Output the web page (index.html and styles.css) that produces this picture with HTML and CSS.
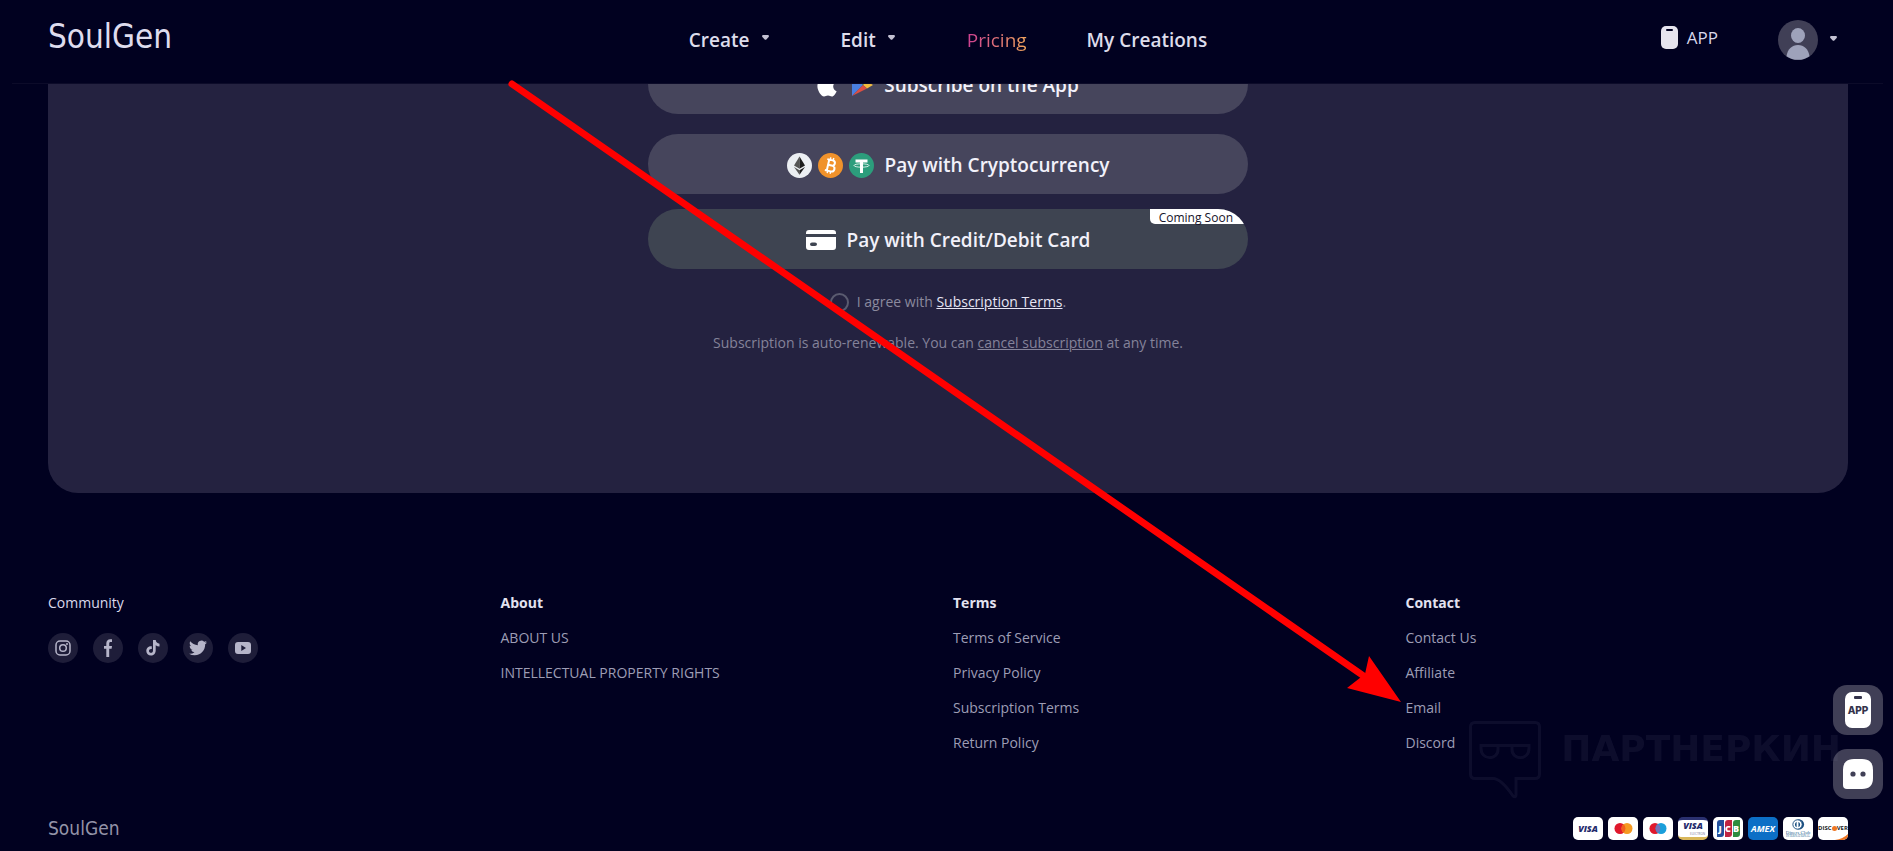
FILE: index.html
```html
<!DOCTYPE html>
<html lang="en">
<head>
    <meta charset="UTF-8">
    <meta name="viewport" content="width=device-width, initial-scale=1.0">
    <title>SoulGen - Pricing</title>
    <link rel="stylesheet" href="styles.css">
</head>
<body>
    <header class="header">
        <div class="header-inner">
            <a class="logo" href="#">SoulGen</a>
            <nav class="nav">
                <a class="has-menu" href="#">Create <svg class="caret" viewBox="0 0 8 6"><path d="M1 0h6q1 0 1 1v1L5 5.500q-1 .6-2 0L0 2V1q0-1 1-1z"/></svg></a>
                <a class="has-menu" href="#">Edit <svg class="caret" viewBox="0 0 8 6"><path d="M1 0h6q1 0 1 1v1L5 5.500q-1 .6-2 0L0 2V1q0-1 1-1z"/></svg></a>
                <a class="active" href="#">Pricing</a>
                <a href="#">My Creations</a>
            </nav>
            <div class="account">
                <a class="app-link" href="#">
                    <svg width="17" height="23" viewBox="0 0 17 23"><rect width="17" height="23" rx="5" fill="#e6e4ee"/><rect x="5" y="3" width="7" height="2" rx="1" fill="#000020"/></svg>
                    APP
                </a>
                <button class="user" aria-label="Account">
                    <svg width="40" height="40" viewBox="0 0 40 40">
                        <circle cx="20" cy="20" r="20" fill="#403f56"/>
                        <ellipse cx="20" cy="15.500" rx="7" ry="7.500" fill="#9ea2ba"/>
                        <path d="M8.500 36.200C9.500 29 14 25 20 25s10.500 4 11.500 11.200A20 20 0 0 1 8.500 36.200z" fill="#9ea2ba"/>
                    </svg>
                    <svg class="caret" viewBox="0 0 8 6"><path d="M1 0h6q1 0 1 1v1L5 5.500q-1 .6-2 0L0 2V1q0-1 1-1z"/></svg>
                </button>
            </div>
        </div>
    </header>

    <main class="pricing">
        <div class="pay-list">
            <button class="pay pay-app">
                <svg width="20" height="24" viewBox="0 0 20 24"><path d="M14 1c.2 2.500-2 5-4.300 5C9.400 3.500 11.600 1.200 14 1zM10 7.500c1.200 0 2.300-1.100 4.300-1.100 1.700 0 3.500 1 4.500 2.600-3.900 2.200-3.200 7.600.8 9.200-.9 2.300-2.800 5.300-4.700 5.300-1.500 0-2-1-3.900-1s-2.500 1-3.900 1C4 23.500.4 17.500.4 13.300c0-4.300 2.700-6.800 5.400-6.800 1.800 0 3 1 4.200 1z" fill="#fff"/></svg>
                <svg class="play" width="21" height="24" viewBox="0 0 21 24"><path d="M0 1v22l11-11z" fill="#4a7fe0"/><path d="M0 1l15 7.500L11 12z" fill="#3fae5a"/><path d="M15 8.500L21 12l-6 3.500L11 12z" fill="#f3bd3e"/><path d="M0 23l15-7.500L11 12z" fill="#dd4f43"/></svg>
                Subscribe on the App
            </button>
            <button class="pay">
                <span class="coins">
                    <svg width="25" height="25" viewBox="0 0 25 25"><circle cx="12.500" cy="12.500" r="12.500" fill="#eceff3"/><path d="M12.500 3.500l-5.500 9 5.500 3.300z" fill="#555"/><path d="M12.500 3.500l5.500 9-5.500 3.300z" fill="#1d1d1d"/><path d="M7 14l5.500 3.300v4.500z" fill="#555"/><path d="M18 14l-5.500 3.300v4.500z" fill="#1d1d1d"/></svg>
                    <svg width="25" height="25" viewBox="0 0 25 25"><circle cx="12.500" cy="12.500" r="12.500" fill="#f0922b"/><g transform="rotate(13 12.500 12.500)" fill="none" stroke="#fff" stroke-width="2"><path d="M8 7h5.500c3.700 0 3.700 5.300 0 5.300H10h4c4.200 0 4.200 5.900 0 5.900H8M10 7v11"/><path d="M11 4.500V7m3-2.500V7m-3 11v2.600m3-2.600v2.600" stroke-width="1.500"/></g></svg>
                    <svg width="25" height="25" viewBox="0 0 25 25"><circle cx="12.500" cy="12.500" r="12.500" fill="#2c9d7c"/><path d="M6.500 6.500h12v3H14V20h-3V9.500H6.500z" fill="#fff"/><ellipse cx="12.500" cy="12.500" rx="7.500" ry="1.700" fill="none" stroke="#fff" stroke-width=".8"/></svg>
                </span>
                Pay with Cryptocurrency
            </button>
            <button class="pay pay-card">
                <svg class="card-icon" width="30" height="20" viewBox="0 0 30 20"><path d="M3 0h24q3 0 3 3v1H0V3q0-3 3-3zM0 7h30v10q0 3-3 3H3q-3 0-3-3zM6 12.500q-2 0-2 1.800T6 16h3q2 0 2-1.700t-2-1.800z" fill="#fff" fill-rule="evenodd"/></svg>
                Pay with Credit/Debit Card
                <span class="soon">Coming Soon</span>
            </button>
        </div>
        <div class="agree">
            <input type="radio" id="agree">
            <label for="agree">I agree with <a href="#">Subscription Terms</a>.</label>
        </div>
        <p class="renew">Subscription is auto-renewable. You can <a href="#">cancel subscription</a> at any time.</p>
    </main>

    <footer class="footer">
        <div class="columns">
            <section>
                <h2 class="light">Community</h2>
                <div class="socials">
                    <a href="#" aria-label="Instagram"><svg viewBox="0 0 16 16"><rect x="1" y="1" width="14" height="14" rx="4" fill="none" stroke="currentColor" stroke-width="1.500"/><circle cx="8" cy="8" r="3.300" fill="none" stroke="currentColor" stroke-width="1.500"/><circle cx="12" cy="4" r="1" fill="currentColor"/></svg></a>
                    <a href="#" aria-label="Facebook"><svg viewBox="0 0 16 16"><path d="M6.300 17V8.800H4V6h2.300V3.500C6.300.8 7.800-.8 10.300-.8H12v2.900h-1.300c-1.200 0-1.500.6-1.500 1.600V6H12l-.4 2.800H9.200V17z" fill="currentColor"/></svg></a>
                    <a href="#" aria-label="TikTok"><svg viewBox="0 0 16 16"><path d="M8 0h2.700c.2 2.100 1.700 3.500 3.800 3.700v2.700c-1.500 0-2.700-.4-3.800-1.200v5.300c0 3-2.200 5-4.700 5-2.700 0-4.700-2-4.700-4.600 0-3 2.500-5 5.500-4.600v2.800c-1.600-.4-2.800.5-2.800 1.800 0 1.100.8 1.900 1.900 1.900C7.200 12.800 8 12 8 10.500z" fill="currentColor"/></svg></a>
                    <a href="#" aria-label="Twitter"><svg class="wide" viewBox="0 0 24 24"><path d="M23.950 4.570a10 10 0 0 1-2.820.77 4.960 4.960 0 0 0 2.160-2.720c-.95.550-2 .950-3.130 1.180a4.920 4.920 0 0 0-8.380 4.480C7.690 8.090 4.070 6.130 1.640 3.160a4.820 4.820 0 0 0-.67 2.480c0 1.710.87 3.210 2.190 4.100a4.900 4.900 0 0 1-2.230-.62v.06a4.920 4.920 0 0 0 3.950 4.830 5 5 0 0 1-2.210.08 4.940 4.940 0 0 0 4.600 3.420A9.870 9.870 0 0 1 0 19.540a14 14 0 0 0 7.560 2.210c9.050 0 14-7.500 14-13.980 0-.21 0-.42-.02-.63a9.940 9.940 0 0 0 2.460-2.550z" fill="currentColor"/></svg></a>
                    <a href="#" aria-label="YouTube"><svg viewBox="0 0 16 16"><path d="M3 2h10q3 0 3 3v6q0 3-3 3H3q-3 0-3-3V5q0-3 3-3zM6.300 5v6l4.700-3z" fill="currentColor" fill-rule="evenodd"/></svg></a>
                </div>
            </section>
            <section>
                <h2>About</h2>
                <a href="#">ABOUT US</a>
                <a href="#">INTELLECTUAL PROPERTY RIGHTS</a>
            </section>
            <section>
                <h2>Terms</h2>
                <a href="#">Terms of Service</a>
                <a href="#">Privacy Policy</a>
                <a href="#">Subscription Terms</a>
                <a href="#">Return Policy</a>
            </section>
            <section>
                <h2>Contact</h2>
                <a href="#">Contact Us</a>
                <a href="#">Affiliate</a>
                <a href="#">Email</a>
                <a href="#">Discord</a>
            </section>
        </div>
        <div class="bottom">
            <span class="logo logo-small">SoulGen</span>
            <div class="cards">
                <span class="card visa">VISA</span>
                <span class="card"><svg viewBox="0 0 30 23"><circle cx="12" cy="11.500" r="5.500" fill="#e0182c"/><circle cx="19" cy="11.500" r="5.500" fill="#f59a23"/><path d="M15.500 7.300a5.500 5.500 0 0 1 0 8.400 5.500 5.500 0 0 1 0-8.400z" fill="#f2601f"/></svg></span>
                <span class="card"><svg viewBox="0 0 30 23"><circle cx="12" cy="11.500" r="5.500" fill="#e0182c"/><circle cx="18" cy="11.500" r="5.500" fill="#1a9fdb"/><path d="M15 7a5.500 5.500 0 0 1 0 9 5.500 5.500 0 0 1 0-9z" fill="#7672b8"/></svg></span>
                <span class="card electron"><b>VISA</b><small>ELECTRON</small></span>
                <span class="card jcb"><i>J</i><i>C</i><i>B</i></span>
                <span class="card amex">AMEX</span>
                <span class="card diners"><svg viewBox="0 0 30 15"><circle cx="16" cy="8" r="5.500" fill="#1b4f80"/><circle cx="14.500" cy="8" r="5" fill="#fff" stroke="#1b4f80"/><path d="M13.500 5a3.400 3.400 0 0 0 0 6zM15.500 5a3.400 3.400 0 0 1 0 6z" fill="#1b4f80"/></svg><span>Diners Club</span><small>INTERNATIONAL</small></span>
                <span class="card discover"><svg viewBox="0 0 30 23"><path d="M30 17v6H17q8-1 13-6z" fill="#ee7623"/></svg><span>DISC<em></em>VER</span></span>
            </div>
        </div>
    </footer>

    <div class="floaters">
        <button aria-label="Get the app"><span class="float-app">APP</span></button>
        <button aria-label="Chat"><svg width="30" height="30" viewBox="0 0 30 30"><path d="M11 0h8q11 0 11 11v8q0 11-11 11H4q-4 0-4-4V11Q0 0 11 0z" fill="#fff"/><circle cx="10" cy="15" r="2.600" fill="#403f56"/><circle cx="20" cy="15" r="2.600" fill="#403f56"/></svg></button>
    </div>

    <div class="watermark">
        <svg width="72" height="78" viewBox="0 0 72 78" fill="none" stroke="currentColor" stroke-width="3"><path d="M6 1.500h60q4.500 0 4.500 4.500v47q0 4.500-4.500 4.500H47V74q0 3-3 1Q32 57.500 24 57.500H6q-4.500 0-4.500-4.500V6q0-4.500 4.500-4.500z"/><path d="M12 24.500h48v3c0 12-17 12-17 1v-4H29v4c0 11-17 11-17-1z"/></svg>
        <span>ПАРТНЕРКИН</span>
    </div>

    <svg class="arrow" width="1893" height="851" viewBox="0 0 1893 851">
        <path d="M512 84L1368 679" stroke="#f00" stroke-width="7" stroke-linecap="round"/>
        <path d="M1401 702l-32-46-4 18-18 14z" fill="#f00"/>
    </svg>
</body>
</html>
```
FILE: styles.css
```css
* {
    box-sizing: border-box;
}

body {
    margin: 0;
    position: relative;
    background: #010120;
    color: #9d9db5;
    font-family: "Open Sans", "Noto Sans", sans-serif;
    font-size: 14px;
    line-height: 20px;
    overflow-x: hidden;
}

a {
    color: inherit;
    text-decoration: none;
}

button {
    font: inherit;
    color: inherit;
    border: none;
    background: none;
    padding: 0;
    cursor: pointer;
}

/* Header */
.header {
    position: fixed;
    top: 0;
    left: 0;
    right: 0;
    z-index: 5;
    height: 84px;
    background: #010120;
}

.header::after {
    content: "";
    display: block;
    height: 1px;
    margin: 0 10px 0 12px;
    background: #0c0b29;
}

.header-inner {
    height: 83px;
    padding: 0 45px 4px 48px;
    display: grid;
    grid-template-columns: 1fr auto 1fr;
    align-items: center;
}

.logo {
    font-family: "DejaVu Sans Condensed", "DejaVu Sans", sans-serif;
    font-size: 33px;
    line-height: 40px;
    color: #dedcee;
}

.header .logo {
    padding-bottom: 6px;
}

.nav {
    display: flex;
    gap: 60px;
    font-size: 19px;
    font-weight: 600;
    line-height: 28px;
    color: #dddceb;
}

.has-menu {
    display: flex;
    gap: 12px;
    padding-right: 12px;
}

.caret {
    width: 7px;
    height: 5px;
    margin-top: 9px;
    fill: #c3c1d3;
}

.active {
    font-weight: 500;
    background: linear-gradient(90deg, #cd3f92, #f0a45c);
    -webkit-background-clip: text;
    background-clip: text;
    color: transparent;
}

.account {
    display: flex;
    justify-content: flex-end;
    align-items: center;
    gap: 60px;
    padding-right: 11px;
}

.app-link {
    display: flex;
    align-items: center;
    gap: 9px;
    font-size: 17px;
    color: #d8d7ea;
    padding-bottom: 4px;
}

.user {
    display: flex;
    gap: 12px;
}

.user .caret {
    margin-top: 16px;
}

/* Payment panel */
.pricing {
    margin: 0 45px 0 48px;
    padding: 54px 20px 140px;
    border-radius: 0 0 30px 30px;
    background: #242240;
    text-align: center;
}

.pay-list {
    max-width: 600px;
    margin: 0 auto;
    display: grid;
    gap: 15px;
}

.pay {
    position: relative;
    display: flex;
    justify-content: center;
    align-items: center;
    gap: 11px;
    height: 60px;
    padding-top: 2px;
    border-radius: 30px;
    overflow: hidden;
    background: #46455c;
    color: #f2f1fa;
    font-size: 19px;
    font-weight: 600;
}

.pay-app {
    margin-bottom: 5px;
}

.play {
    margin-left: 4px;
}

.coins {
    display: flex;
    gap: 6px;
}

.pay-card {
    background: #3e4451;
}

.soon {
    position: absolute;
    top: 0;
    right: 0;
    height: 15px;
    padding: 0 15px 0 9px;
    border-bottom-left-radius: 5px;
    background: #fff;
    color: #16152b;
    font-size: 12px;
    font-weight: 400;
    line-height: 17px;
}

.agree {
    display: flex;
    justify-content: center;
    align-items: center;
    gap: 8px;
    margin-top: 23px;
    color: #8b8a9e;
}

.agree input {
    appearance: none;
    width: 19px;
    height: 19px;
    margin: 0;
    border: 2px solid #5a5b70;
    border-radius: 50%;
}

.agree a {
    color: #e6e5f3;
    text-decoration: underline;
}

.renew {
    margin: 21px 0 0;
    color: #84839a;
}

.renew a {
    text-decoration: underline;
}

/* Footer */
.footer {
    padding: 100px 45px 10px 48px;
}

.columns {
    display: grid;
    grid-template-columns: repeat(4, 1fr);
    gap: 10px;
}

.columns section {
    display: flex;
    flex-direction: column;
    align-items: flex-start;
    gap: 15px;
}

.columns h2 {
    margin: 0;
    font-size: 14px;
    font-weight: 700;
    color: #e3e2f0;
}

.columns .light {
    font-weight: 400;
    color: #d9d8ea;
}

.socials {
    display: flex;
    gap: 15px;
    margin-top: 5px;
}

.socials a {
    display: flex;
    justify-content: center;
    align-items: center;
    width: 30px;
    height: 30px;
    border-radius: 50%;
    background: #1e1d39;
    color: #b6b5c9;
}

.socials svg {
    width: 16px;
    height: 16px;
    overflow: visible;
}

.socials .wide {
    width: 18px;
    height: 18px;
}

.bottom {
    display: flex;
    justify-content: space-between;
    align-items: center;
    margin-top: 62px;
}

.logo-small {
    font-size: 19px;
    line-height: 26px;
    color: #9493a8;
}

.cards {
    display: flex;
    gap: 5px;
}

.card {
    position: relative;
    width: 30px;
    height: 23px;
    border-radius: 5px;
    overflow: hidden;
    background: #fff;
    text-align: center;
}

.card svg {
    display: block;
    width: 100%;
}

.visa,
.electron b {
    color: #1f2a6b;
    font-size: 9px;
    font-weight: 800;
    font-style: italic;
    line-height: 23px;
}

.electron {
    display: flex;
    flex-direction: column;
    border-top: 3px solid #2a3070;
    border-bottom: 3px solid #d9b75a;
}

.electron b {
    line-height: 12px;
}

.electron small {
    color: #77779a;
    font-size: 3px;
    line-height: 4px;
    text-align: right;
    padding-right: 3px;
}

.jcb {
    display: flex;
    justify-content: center;
    align-items: center;
    gap: 1px;
}

.jcb i {
    width: 7px;
    height: 17px;
    border-radius: 3px 0 3px 0;
    background: #24509c;
    color: #fff;
    font-size: 9px;
    font-style: normal;
    font-weight: 800;
    line-height: 17px;
}

.jcb i:nth-child(2) {
    background: #bf2542;
}

.jcb i:nth-child(3) {
    background: #2d8c3f;
}

.amex {
    background: #0c6fc6;
    color: #fff;
    font-size: 9px;
    font-style: italic;
    font-weight: 700;
    line-height: 23px;
}

.diners {
    display: flex;
    flex-direction: column;
    color: #2b6a94;
    font-family: "Liberation Serif", serif;
    font-size: 5px;
    line-height: 4px;
}

.diners svg {
    height: 14px;
    flex: none;
}

.diners small {
    font-size: 3px;
    line-height: 3px;
}

.discover span {
    position: absolute;
    inset: 0;
    display: flex;
    justify-content: center;
    align-items: center;
    color: #222;
    font-size: 6px;
    font-weight: 700;
}

.discover em {
    width: 5px;
    height: 5px;
    border-radius: 50%;
    background: #ee7623;
}

/* Side buttons */
.floaters {
    position: fixed;
    right: 10px;
    bottom: 52px;
    z-index: 6;
    display: grid;
    gap: 14px;
}

.floaters button {
    display: flex;
    justify-content: center;
    align-items: center;
    width: 50px;
    height: 50px;
    border-radius: 14px;
    background: #403f56;
}

.float-app {
    position: relative;
    width: 26px;
    height: 36px;
    border-radius: 7px;
    background: #fff;
    color: #34334b;
    font-family: Inter, sans-serif;
    font-size: 10px;
    font-weight: 800;
    line-height: 37px;
}

.float-app::before {
    content: "";
    position: absolute;
    top: 4px;
    left: 9px;
    width: 8px;
    height: 3px;
    border-radius: 1px;
    background: #34334b;
}

.watermark {
    position: absolute;
    right: 52px;
    bottom: 52px;
    z-index: 7;
    display: flex;
    gap: 20px;
    color: #8080a0;
    opacity: 0.1;
    pointer-events: none;
}

.watermark span {
    font-family: "DejaVu Sans", sans-serif;
    font-size: 36px;
    font-weight: 700;
    line-height: 56px;
}

.arrow {
    position: absolute;
    top: 0;
    left: 0;
    z-index: 8;
    pointer-events: none;
}
```
